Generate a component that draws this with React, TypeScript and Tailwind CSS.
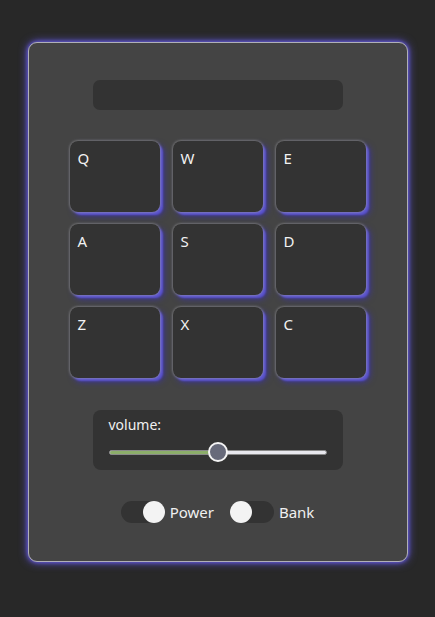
const pads = ["Q", "W", "E", "A", "S", "D", "Z", "X", "C"]

function Toggle({ on, label }: { on: boolean; label: string }) {
  return (
    <div className="flex items-center gap-[5px]">
      <div className={`flex h-[22px] w-[44px] rounded-full bg-[#333333] ${on ? "justify-end" : "justify-start"}`}>
        <div className="h-[22px] w-[22px] rounded-full bg-[#f3f3f3]" />
      </div>
      <span className="text-[15px] leading-none text-[#f0f0f0]">{label}</span>
    </div>
  )
}

export default function App() {
  return (
    <div className="flex min-h-screen justify-center bg-[#282828] pt-[42px] font-['Noto_Sans',sans-serif]">
      <div className="flex h-[520px] w-[380px] flex-col items-center rounded-[9px] border border-[#b0b0b8] bg-[#444444] shadow-[0_0_10px_#6357e0,0_0_4px_#6a5fe8]">
        <div className="mt-[37px] h-[30px] w-[250px] rounded-[7px] bg-[#333333]" />

        <div className="mt-[31px] grid grid-cols-[repeat(3,90px)] gap-x-[13px] gap-y-[12px]">
          {pads.map(k => (
            <div
              key={k}
              className="h-[71px] rounded-[8px] bg-[#333333] px-[8px] pt-[6px] text-[15px] text-[#f2f2f2] shadow-[0_0_3px_#a0a0a0,3px_3px_2px_#5a52d0,4px_4px_6px_#3c3598]"
            >
              {k}
            </div>
          ))}
        </div>

        <div className="mt-[32px] h-[60px] w-[250px] rounded-[8px] bg-[#333333] px-[16px] pt-[6px]">
          <div className="text-[14px] leading-[18px] text-[#f0f0f0]">volume:</div>
          <div className="relative mt-[9px] flex h-[18px] items-center">
            <div className="flex h-[5px] w-full overflow-hidden rounded-full border border-[#8a8a8a] bg-[#e8e8ee]">
              <div className="h-full w-[108px] bg-[#8cae6a]" />
            </div>
            <div className="absolute left-[99px] top-[-1px] h-[20px] w-[20px] rounded-full border-2 border-[#f4f4f4] bg-[#676a7a]" />
          </div>
        </div>

        <div className="mt-[31px] flex items-center gap-[16px]">
          <Toggle on label="Power" />
          <Toggle on={false} label="Bank" />
        </div>
      </div>
    </div>
  )
}
